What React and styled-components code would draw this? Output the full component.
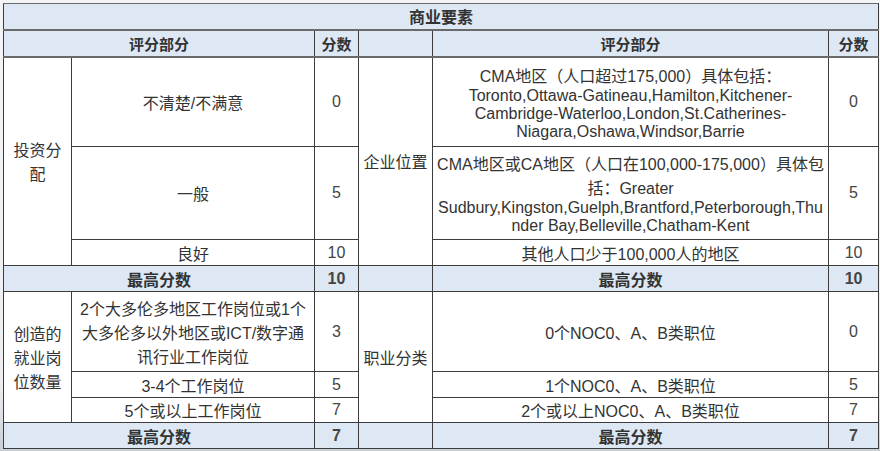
import React from "react";
import styled, { createGlobalStyle } from "styled-components";

const Global = createGlobalStyle`
  html, body { margin: 0; padding: 0; }
  body {
    background: linear-gradient(180deg, #f3f4f6 0%, #eceef1 85%, #c9ced6 100%);
    font-family: "Liberation Sans", "Noto Sans CJK SC", sans-serif;
  }
`;

const Page = styled.div`
  width: 880px;
  height: 451px;
  box-sizing: border-box;
  padding: 3px 2px 3px 3px;
`;

const Table = styled.table`
  width: 875px;
  border-collapse: collapse;
  table-layout: fixed;
  background: #ffffff;
  border: 1px solid #8a8a8a;
  color: #333;
  font-size: 16px;
`;

const Row = styled.tr`
  height: ${(p) => p.$h}px;
`;

const Cell = styled.td`
  border: 1px solid #3c3c3c;
  padding: 0 ${(p) => (p.$pad != null ? p.$pad : 6)}px;
  text-align: center;
  vertical-align: middle;
  line-height: normal;
  white-space: ${(p) => (p.$nowrap ? "nowrap" : "normal")};
  background: ${(p) => (p.$head ? "#dde8f4" : "#ffffff")};
  font-weight: ${(p) => (p.$bold ? 700 : 400)};
  font-size: ${(p) => (p.$size ? p.$size : 16)}px;
  color: ${(p) => (p.$num ? "#444" : "#333")};
`;

const HeadRowCell = styled(Cell)`
  border-top-color: #6a6a6a;
  border-bottom: 2px solid #6a6a6a;
`;

const cols = [68, 243, 44, 74, 396, 50];

export default function App() {
  return (
    <>
      <Global />
      <Page>
        <Table>
          <colgroup>
            {cols.map((w, i) => (
              <col key={i} style={{ width: w }} />
            ))}
          </colgroup>
          <tbody>
            <Row $h={26}>
              <HeadRowCell colSpan={6} $head $bold>
                商业要素
              </HeadRowCell>
            </Row>
            <Row $h={27}>
              <HeadRowCell colSpan={2} $head $bold $size={15}>
                评分部分
              </HeadRowCell>
              <HeadRowCell $head $bold $size={15} $pad={2}>
                分数
              </HeadRowCell>
              <HeadRowCell $head />
              <HeadRowCell $head $bold $size={15}>
                评分部分
              </HeadRowCell>
              <HeadRowCell $head $bold $size={15} $pad={2}>
                分数
              </HeadRowCell>
            </Row>

            <Row $h={90}>
              <Cell rowSpan={3} $pad={8}>
                投资分配
              </Cell>
              <Cell>不清楚/不满意</Cell>
              <Cell $num>0</Cell>
              <Cell rowSpan={3} $pad={3} $nowrap>
                企业位置
              </Cell>
              <Cell $pad={3} $nowrap>
                CMA地区（人口超过175,000）具体包括：
                <br />
                Toronto,Ottawa-Gatineau,Hamilton,Kitchener-
                <br />
                Cambridge-Waterloo,London,St.Catherines-
                <br />
                Niagara,Oshawa,Windsor,Barrie
              </Cell>
              <Cell $num>0</Cell>
            </Row>
            <Row $h={93}>
              <Cell>一般</Cell>
              <Cell $num>5</Cell>
              <Cell $pad={2} $nowrap>
                CMA地区或CA地区（人口在100,000-175,000）具体包
                <br />
                括：Greater
                <br />
                Sudbury,Kingston,Guelph,Brantford,Peterborough,Thu
                <br />
                nder Bay,Belleville,Chatham-Kent
              </Cell>
              <Cell $num>5</Cell>
            </Row>
            <Row $h={26}>
              <Cell>良好</Cell>
              <Cell $num>10</Cell>
              <Cell>其他人口少于100,000人的地区</Cell>
              <Cell $num>10</Cell>
            </Row>
            <Row $h={26}>
              <Cell colSpan={2} $head $bold>
                最高分数
              </Cell>
              <Cell $head $bold $num>
                10
              </Cell>
              <Cell $head />
              <Cell $head $bold>
                最高分数
              </Cell>
              <Cell $head $bold $num>
                10
              </Cell>
            </Row>

            <Row $h={80}>
              <Cell rowSpan={3} $pad={8}>
                创造的就业岗位数量
              </Cell>
              <Cell $pad={4} $nowrap>
                2个大多伦多地区工作岗位或1个
                <br />
                大多伦多以外地区或ICT/数字通
                <br />
                讯行业工作岗位
              </Cell>
              <Cell $num>3</Cell>
              <Cell rowSpan={3} $pad={3} $nowrap>
                职业分类
              </Cell>
              <Cell>0个NOC0、A、B类职位</Cell>
              <Cell $num>0</Cell>
            </Row>
            <Row $h={26}>
              <Cell>3-4个工作岗位</Cell>
              <Cell $num>5</Cell>
              <Cell>1个NOC0、A、B类职位</Cell>
              <Cell $num>5</Cell>
            </Row>
            <Row $h={25}>
              <Cell>5个或以上工作岗位</Cell>
              <Cell $num>7</Cell>
              <Cell>2个或以上NOC0、A、B类职位</Cell>
              <Cell $num>7</Cell>
            </Row>
            <Row $h={26}>
              <Cell colSpan={2} $head $bold>
                最高分数
              </Cell>
              <Cell $head $bold $num>
                7
              </Cell>
              <Cell $head />
              <Cell $head $bold>
                最高分数
              </Cell>
              <Cell $head $bold $num>
                7
              </Cell>
            </Row>
          </tbody>
        </Table>
      </Page>
    </>
  );
}
